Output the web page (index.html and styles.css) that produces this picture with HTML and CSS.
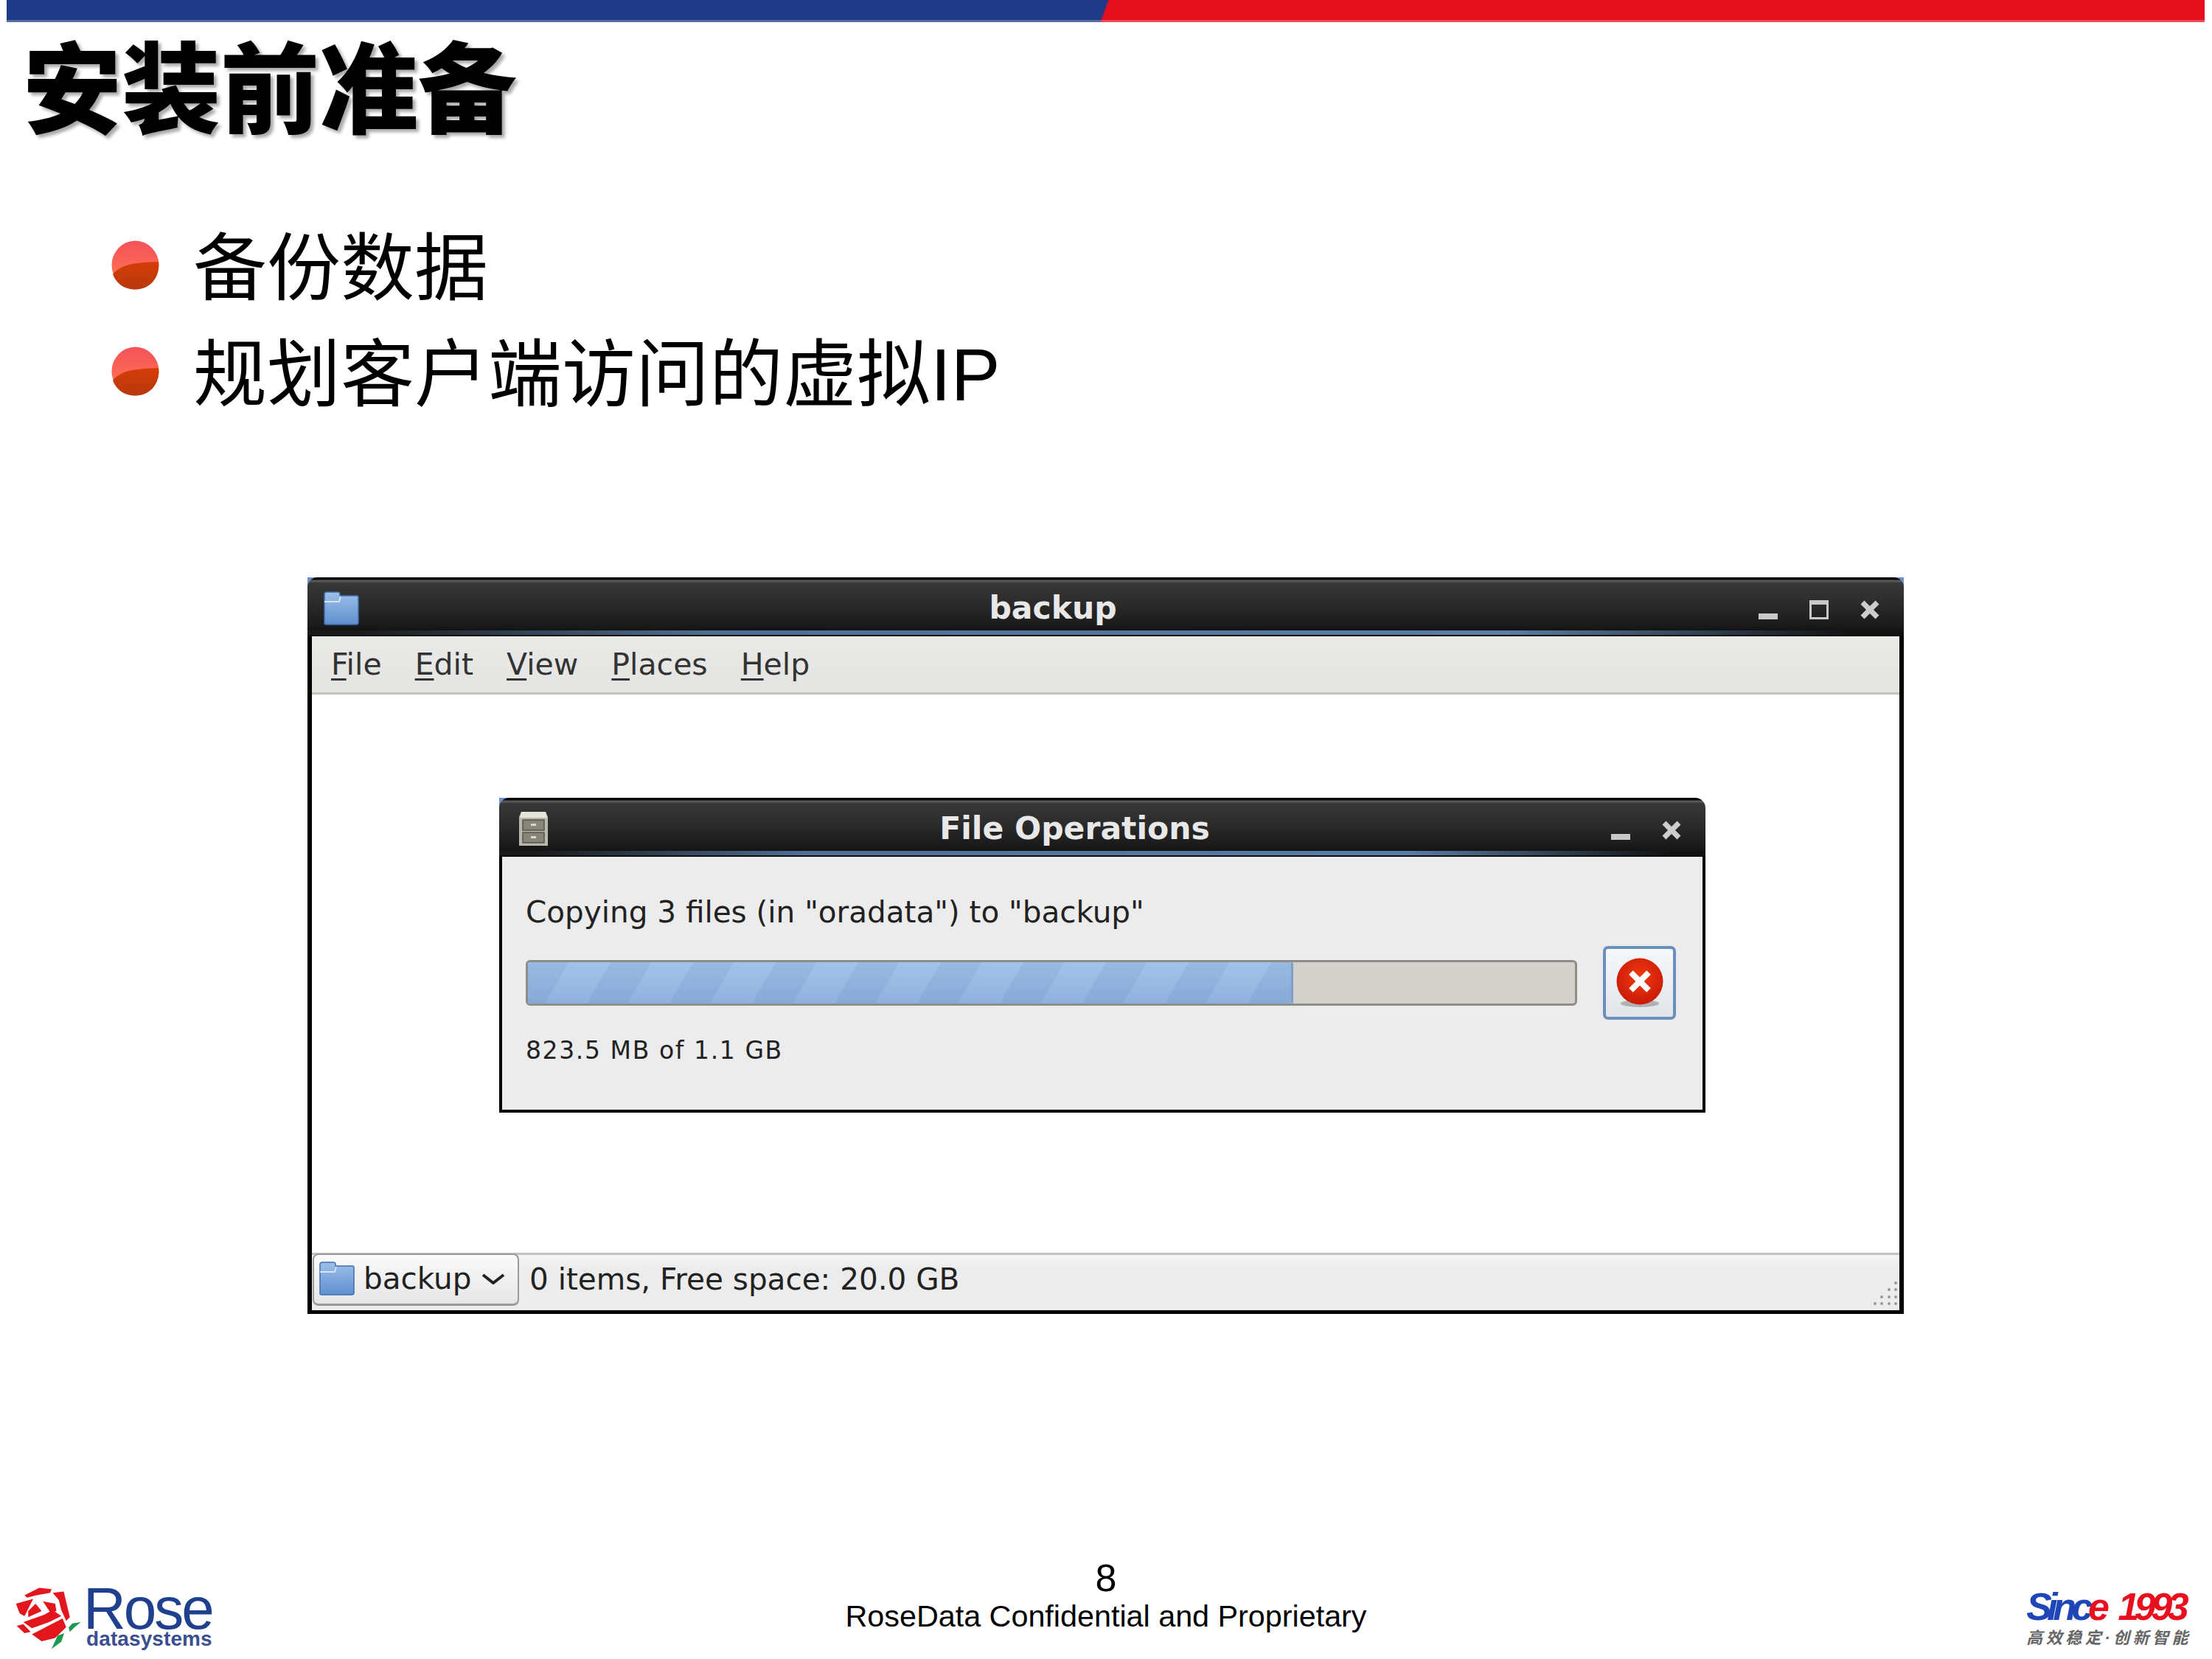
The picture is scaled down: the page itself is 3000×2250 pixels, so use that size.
FILE: index.html
```html
<!DOCTYPE html>
<html lang="zh-CN">
<head>
  <meta charset="UTF-8">
  <title>安装前准备</title>
  <link rel="stylesheet" href="styles.css">
</head>
<body>
  <svg class="defs" width="0" height="0">
    <defs>
      <linearGradient id="folderFill" x1="0" y1="0" x2="0" y2="1">
        <stop offset="0" stop-color="#9dc0e8"/>
        <stop offset="1" stop-color="#5f8fd0"/>
      </linearGradient>
      <linearGradient id="ballTop" x1="0" y1="0" x2="0" y2="1">
        <stop offset="0" stop-color="#f5525a"/>
        <stop offset="1" stop-color="#ff7a50"/>
      </linearGradient>
      <linearGradient id="ballLow" x1="0" y1="0" x2="0" y2="1">
        <stop offset="0" stop-color="#d63c08"/>
        <stop offset="1" stop-color="#b8380e"/>
      </linearGradient>
      <radialGradient id="stopFill" cx="0.5" cy="0.4" r="0.6">
        <stop offset="0" stop-color="#f23a12"/>
        <stop offset="1" stop-color="#c81a08"/>
      </radialGradient>
      <symbol id="bullet" viewBox="0 0 65 67">
        <ellipse cx="32.5" cy="33.5" rx="32" ry="33" fill="url(#ballTop)"/>
        <path d="M2 46 C12 34 26 30 64 29 C66 44 58 66 32.5 66.5 C16 66.5 6 57 2 46 Z" fill="url(#ballLow)"/>
      </symbol>
      <symbol id="folder" viewBox="0 0 49 46">
        <path d="M2 44 L2 4 Q2 1 5 1 L20 1 Q23 1 23 4 L23 6 L46 6 Q48 6 48 8 L48 42 Q48 45 45 45 L4 45 Q2 45 2 44 Z" fill="url(#folderFill)" stroke="#3f6fb0" stroke-width="1.5"/>
        <path d="M2 14 L22 14 L24 7" fill="none" stroke="#d4e4f6" stroke-width="2"/>
      </symbol>
      <symbol id="cabinet" viewBox="0 0 41 48">
        <path d="M4 1 L37 1 L40 8 L40 47 L1 47 L1 8 Z" fill="#b9b9ac"/>
        <path d="M4 1 L37 1 L39 9 L2 9 Z" fill="#e4e4da"/>
        <rect x="6" y="12" width="29" height="14" fill="#85857a" stroke="#55554d" stroke-width="1.5"/>
        <rect x="6" y="29" width="29" height="14" fill="#85857a" stroke="#55554d" stroke-width="1.5"/>
        <rect x="17" y="17" width="7" height="3" fill="#d8d8cf"/>
        <rect x="17" y="34" width="7" height="3" fill="#d8d8cf"/>
      </symbol>
      <symbol id="win-min" viewBox="0 0 26 26">
        <rect x="0" y="18" width="26" height="8" fill="#c9c9c9"/>
      </symbol>
      <symbol id="win-max" viewBox="0 0 26 26">
        <rect x="1.5" y="1.5" width="23" height="23" fill="none" stroke="#c9c9c9" stroke-width="3"/>
        <rect x="0" y="0" width="26" height="6" fill="#c9c9c9"/>
      </symbol>
      <symbol id="win-close" viewBox="0 0 26 26">
        <path d="M3 3 L23 23 M23 3 L3 23" stroke="#cdcdcd" stroke-width="7" fill="none"/>
      </symbol>
    </defs>
  </svg>

  <div class="slide">
    <div class="top-bar"></div>
    <h1 class="slide-title">安装前准备</h1>
    <ul class="points">
      <li><svg class="point-ball"><use href="#bullet"/></svg><span>备份数据</span></li>
      <li><svg class="point-ball"><use href="#bullet"/></svg><span>规划客户端访问的虚拟IP</span></li>
    </ul>

    <div class="window">
      <div class="titlebar">
        <svg class="title-icon folder-icon"><use href="#folder"/></svg>
        <div class="title-text">backup</div>
        <div class="controls">
          <svg class="ctl"><use href="#win-min"/></svg>
          <svg class="ctl"><use href="#win-max"/></svg>
          <svg class="ctl"><use href="#win-close"/></svg>
        </div>
      </div>
      <div class="window-body">
        <div class="menubar">
          <span><u>F</u>ile</span>
          <span><u>E</u>dit</span>
          <span><u>V</u>iew</span>
          <span><u>P</u>laces</span>
          <span><u>H</u>elp</span>
        </div>
        <div class="view">
          <div class="window dialog">
            <div class="titlebar">
              <svg class="title-icon cabinet-icon"><use href="#cabinet"/></svg>
              <div class="title-text">File Operations</div>
              <div class="controls">
                <svg class="ctl"><use href="#win-min"/></svg>
                <svg class="ctl"><use href="#win-close"/></svg>
              </div>
            </div>
            <div class="dialog-body">
              <div class="copy-text">Copying 3 files (in "oradata") to "backup"</div>
              <div class="progress-row">
                <div class="trough">
                  <div class="fill" style="width: 72.9%"></div>
                </div>
                <div class="stop-btn">
                  <svg width="66" height="68" viewBox="0 0 66 68">
                    <ellipse cx="33" cy="62" rx="26" ry="5" fill="#8a8f90" opacity="0.6"/>
                    <circle cx="33" cy="32" r="31.5" fill="url(#stopFill)"/>
                    <path d="M21 20 L45 44 M45 20 L21 44" stroke="#fff" stroke-width="8" fill="none"/>
                  </svg>
                </div>
              </div>
              <div class="size-text">823.5 MB of 1.1 GB</div>
            </div>
          </div>
        </div>
        <div class="statusbar">
          <div class="path-combo">
            <svg class="combo-folder"><use href="#folder"/></svg>
            <span>backup</span>
            <svg class="combo-arrow" width="32" height="15" viewBox="0 0 32 15">
              <path d="M2 2 L16 13 L30 2" fill="none" stroke="#222" stroke-width="4"/>
            </svg>
          </div>
          <div class="status-text">0 items, Free space: 20.0 GB</div>
          <svg class="grip" width="38" height="38" viewBox="0 0 38 38">
            <g fill="#9a9a9a">
              <circle cx="33" cy="5" r="2"/>
              <circle cx="24" cy="14" r="2"/><circle cx="33" cy="14" r="2"/>
              <circle cx="14" cy="24" r="2"/><circle cx="24" cy="24" r="2"/><circle cx="33" cy="24" r="2"/>
              <circle cx="5" cy="33" r="2"/><circle cx="14" cy="33" r="2"/><circle cx="24" cy="33" r="2"/><circle cx="33" cy="33" r="2"/>
            </g>
          </svg>
        </div>
      </div>
    </div>

    <footer class="slide-footer">
      <div class="rose-logo">
        <svg class="rose-mark" width="93" height="90" viewBox="60 90 280 270">
          <g fill="#e2161c">
            <path d="M100 130 L160 100 L210 105 L205 120 L150 130 L110 140 Z"/>
            <path d="M215 120 L260 115 L285 220 L270 235 L250 190 L240 150 Z"/>
            <path d="M65 165 L135 145 L100 215 L80 205 Z"/>
            <path d="M145 165 L170 195 L115 220 L115 195 Z"/>
            <path d="M175 155 L225 165 L230 195 L205 200 Z"/>
            <path d="M95 240 L180 210 L215 190 L250 215 L200 240 L130 265 Z"/>
            <path d="M130 290 L255 225 L270 260 L225 305 L170 318 Z"/>
            <path d="M68 255 L95 248 L125 280 L100 285 Z"/>
          </g>
          <g fill="#1a9a4f">
            <path d="M280 262 L295 245 L330 240 L305 260 L285 280 Z"/>
            <path d="M210 350 L235 295 L262 285 L250 320 Z"/>
          </g>
        </svg>
        <div class="rose-words">
          <div class="rose-name">Rose</div>
          <div class="rose-sub">datasystems</div>
        </div>
      </div>
      <div class="footer-center">
        <div class="page-no">8</div>
        <div class="confidential">RoseData Confidential and Proprietary</div>
      </div>
      <div class="since">
        <div class="since-line"><span class="blue">Sinc</span><span class="red">e</span><span class="red year">1993</span></div>
        <div class="since-sub">高效稳定·创新智能</div>
      </div>
    </footer>
  </div>
</body>
</html>
```

FILE: styles.css
```css
html, body {
  margin: 0;
  padding: 0;
  background: #fff;
}
.defs {
  position: absolute;
}
.slide {
  width: 3000px;
  height: 2250px;
  display: flex;
  flex-direction: column;
  font-family: "Liberation Sans", "Noto Sans CJK SC", sans-serif;
  color: #000;
  overflow: hidden;
}
.top-bar {
  height: 30px;
  margin: 0 10px 0 9px;
  background: linear-gradient(110deg, #1f3a87 0 49.9%, #e60f1e 50%);
  box-shadow: inset 0 -3px 0 rgba(255, 255, 255, 0.25);
}
.slide-title {
  margin: 24px 0 0 31px;
  font-size: 134px;
  line-height: 140px;
  font-weight: 900;
  text-shadow: 4px 4px 4px rgba(0, 0, 0, 0.35);
}
.points {
  list-style: none;
  margin: 93px 0 0 0;
  padding: 0 0 0 151px;
}
.points li {
  display: flex;
  align-items: center;
  gap: 46px;
  height: 144px;
  font-size: 100px;
}
.points span {
  margin-top: -8px;
}
.point-ball {
  width: 65px;
  height: 67px;
  flex: none;
}

/* gnome window chrome */
.window {
  width: 2165px;
  height: 999px;
  margin: 208px 0 0 417px;
  display: flex;
  flex-direction: column;
  background:
    linear-gradient(#6f8fc9, #6f8fc9) 0 0 / 14px 14px no-repeat,
    linear-gradient(#6f8fc9, #6f8fc9) 100% 0 / 14px 14px no-repeat;
  font-family: "DejaVu Sans", sans-serif;
}
.titlebar {
  height: 80px;
  flex: none;
  box-sizing: border-box;
  display: flex;
  align-items: center;
  padding: 4px 33px 0 21px;
  border-radius: 14px 14px 0 0;
  background:
    linear-gradient(90deg, #1a1a1a 3%, #4e6e94 25%, #5a7ea6 75%, #111 97%) 0 72px / 100% 6px no-repeat,
    linear-gradient(#050505 0 3px, #5a5a5a 4px 5px, #363636 8px, #2f2f2f 35%, #1b1b1b 80%, #0c0c0c 100%);
}
.title-text {
  flex: 1;
  text-align: center;
  padding-right: 16px;
  margin-top: -2px;
  font-size: 42.5px;
  font-weight: bold;
  color: #e8e8e8;
}
.title-icon {
  flex: none;
}
.folder-icon {
  width: 49px;
  height: 46px;
}
.cabinet-icon {
  width: 41px;
  height: 48px;
  margin-left: 5px;
}
.controls {
  display: flex;
  gap: 43px;
  margin-top: 4px;
}
.ctl {
  width: 26px;
  height: 26px;
}
.window-body {
  flex: 1;
  display: flex;
  flex-direction: column;
  border: 6px solid #000;
  border-top: none;
  border-bottom-width: 5px;
  background: #fff;
}
.menubar {
  height: 79px;
  box-sizing: border-box;
  display: flex;
  align-items: center;
  gap: 45px;
  padding: 0 0 0 26px;
  font-size: 41px;
  color: #333;
  background: linear-gradient(#e9e9e8, #e4e4e2);
  border-bottom: 3px solid #c4c4bf;
}
.menubar u {
  text-decoration-thickness: 3px;
  text-underline-offset: 5px;
}
.view {
  flex: 1;
  background: #fff;
}
.dialog {
  width: 1636px;
  height: 427px;
  margin: 140px 0 0 254px;
  background: linear-gradient(#6f8fc9, #6f8fc9) 0 0 / 14px 14px no-repeat;
}
.dialog .title-text {
  padding-right: 14px;
}
.dialog-body {
  flex: 1;
  box-sizing: border-box;
  border: 4px solid #000;
  border-top: none;
  background: #ececec;
  padding: 50px 36px 0 32px;
  color: #222;
}
.copy-text {
  font-size: 40.5px;
  line-height: 50px;
}
.progress-row {
  display: flex;
  align-items: center;
  gap: 35px;
  margin-top: 21px;
}
.trough {
  flex: 1;
  height: 62px;
  box-sizing: border-box;
  border: 3px solid #8f8d88;
  border-radius: 6px;
  background: #d4d1cd;
}
.fill {
  height: 100%;
  border-right: 3px solid #7f9fc8;
  border-radius: 3px;
  background:
    repeating-linear-gradient(120deg, rgba(60, 100, 165, 0.1) 0 48px, transparent 48px 97px),
    linear-gradient(#a3c4e9, #8fb1de);
}
.stop-btn {
  width: 99px;
  height: 100px;
  box-sizing: border-box;
  display: flex;
  align-items: center;
  justify-content: center;
  border: 4px solid #6b8fbd;
  border-radius: 7px;
  background: linear-gradient(#f6f7f8, #e2e5e8);
}
.size-text {
  margin-top: 21px;
  font-size: 33px;
  line-height: 42px;
  letter-spacing: 1.6px;
}
.statusbar {
  height: 78px;
  box-sizing: border-box;
  display: flex;
  align-items: flex-start;
  background: linear-gradient(#f4f4f4, #ececec 20px);
  border-top: 3px solid #c4c4c4;
  font-size: 40.5px;
  color: #222;
}
.path-combo {
  width: 280px;
  height: 71px;
  margin: -2px 0 0 1px;
  box-sizing: border-box;
  display: flex;
  align-items: center;
  padding: 0 0 2px 6px;
  border: 2px solid #9a9a98;
  border-bottom-width: 3px;
  border-radius: 8px;
  background: linear-gradient(#fafafa, #e6e6e6);
}
.combo-folder {
  width: 49px;
  height: 46px;
  flex: none;
}
.path-combo span {
  margin-left: 12px;
}
.combo-arrow {
  margin-left: 14px;
}
.status-text {
  margin-left: 14px;
  line-height: 66px;
}
.grip {
  margin: auto 0 4px auto;
}

/* footer logos */
.slide-footer {
  margin-top: auto;
  display: grid;
  grid-template-columns: 1fr auto 1fr;
  align-items: end;
  padding: 0 20px 10px 20px;
}
.rose-logo {
  display: flex;
  align-items: flex-start;
}
.rose-words {
  padding-top: 4px;
  font-family: "Liberation Sans", sans-serif;
  color: #1f3f8f;
}
.rose-name {
  font-size: 80px;
  line-height: 55px;
  letter-spacing: -3px;
}
.rose-sub {
  margin-left: 4px;
  font-size: 28px;
  line-height: 28px;
  font-weight: bold;
  letter-spacing: 0.1px;
  color: #3a4f8f;
}
.footer-center {
  text-align: center;
  margin-bottom: 25px;
}
.page-no {
  font-size: 52px;
  line-height: 58px;
}
.confidential {
  font-size: 41.3px;
  line-height: 46px;
}
.since {
  justify-self: end;
  margin: 0 8px 5px 0;
}
.since-line {
  font-size: 52px;
  line-height: 44px;
  font-weight: bold;
  font-style: italic;
  letter-spacing: -6.5px;
}
.blue {
  color: #1f46b8;
}
.red {
  color: #e8101e;
}
.year {
  margin-left: 18px;
}
.since-sub {
  margin-top: 8px;
  font-size: 22px;
  line-height: 26px;
  font-weight: bold;
  font-style: italic;
  letter-spacing: 4.5px;
  color: #666;
  white-space: nowrap;
}
```
